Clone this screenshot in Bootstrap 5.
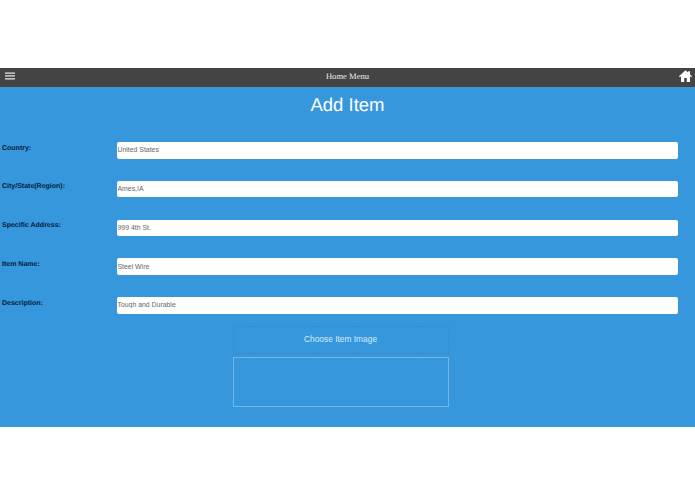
<!DOCTYPE html>
<html lang="en">
<head>
<meta charset="utf-8">
<title>Add Item</title>
<link rel="stylesheet" href="https://cdn.jsdelivr.net/npm/bootstrap@5.3.0/dist/css/bootstrap.min.css">
<style>
html, body { height: 100%; overflow: hidden; }
body { background: #fff; font-family: "Liberation Sans", Arial, sans-serif; text-rendering: geometricPrecision; }
.top-gap { height: 68px; }
.menu-bar { height: 19px; background: #444; color: #fff; }
.menu-title { font-family: "Liberation Serif", serif; font-size: 8.6px; line-height: 17px; height: 19px; color: #f0f0f0; }
.menu-side { width: 20px; }
.menu-burger { margin-left: 1px; margin-top: -3px; }
.menu-home { margin-top: -4px; margin-right: -1px; }
.blue-panel { height: 340px; background: #3697dc; color: #fff; }
.page-title { font-size: 18.5px; line-height: 22px; font-weight: 400; margin: 0; padding-top: 7px; height: 55px; }
.field-row { height: 38.75px; }
.field-label { width: 117px; padding: 0 0 0 2px; margin: 0.5px 0 0; font-size: 7px; line-height: 11px; font-weight: 700; color: #04203a; }
.field-input.form-control { width: 561px; height: 16.6px; min-height: 0; padding: 0 0 1px 0.5px; border: 0; border-radius: 2px; font-size: 6.9px; line-height: 15px; color: #666; }
.image-col { width: 216px; margin-left: 232.5px; margin-top: -9.75px; }
.choose-btn.btn { display: block; height: 28px; width: 100%; padding: 0 0 1px; border: 1px dashed #3f8bc3; border-radius: 0; background: transparent; color: #d6ecfb; font-size: 8.4px; line-height: 25px; }
.image-box { height: 50px; margin-top: 3px; border: 1px solid #76b6e5; }
</style>
</head>
<body>
<div class="top-gap"></div>
<nav class="menu-bar d-flex align-items-center justify-content-between">
  <div class="menu-side ps-1 d-flex align-items-center">
    <svg class="menu-burger" width="10" height="8" viewBox="0 0 10 8" aria-hidden="true"><path d="M0 .4h10v1.300H0zM0 3.300h10v1.300H0zM0 6.200h10v1.300H0z" fill="#e8e8e8"/></svg>
  </div>
  <span class="menu-title">Home Menu</span>
  <div class="menu-side d-flex justify-content-end align-items-center pe-1">
    <svg class="menu-home" width="13" height="12" viewBox="0 0 13 12" aria-hidden="true"><path fill="#fff" d="M6.500 0.300 0 6.300l.8.9 1.200-1V12h3.200V8h2.600v4H11V6.200l1.200 1 .8-.9-2-1.900V1.200H9.200v1.400z"/></svg>
  </div>
</nav>
<main class="blue-panel">
  <h1 class="page-title text-center">Add Item</h1>
  <form>
    <div class="field-row d-flex"><label class="field-label">Country:</label><input class="field-input form-control" type="text" value="United States"></div>
    <div class="field-row d-flex"><label class="field-label">City/State(Region):</label><input class="field-input form-control" type="text" value="Ames,IA"></div>
    <div class="field-row d-flex"><label class="field-label">Specific Address:</label><input class="field-input form-control" type="text" value="999 4th St."></div>
    <div class="field-row d-flex"><label class="field-label">Item Name:</label><input class="field-input form-control" type="text" value="Steel Wire"></div>
    <div class="field-row d-flex"><label class="field-label">Description:</label><input class="field-input form-control" type="text" value="Tough and Durable"></div>
    <div class="image-col">
      <button type="button" class="choose-btn btn">Choose Item Image</button>
      <div class="image-box"></div>
    </div>
  </form>
</main>
<script src="https://cdn.jsdelivr.net/npm/bootstrap@5.3.0/dist/js/bootstrap.bundle.min.js"></script>
</body>
</html>
